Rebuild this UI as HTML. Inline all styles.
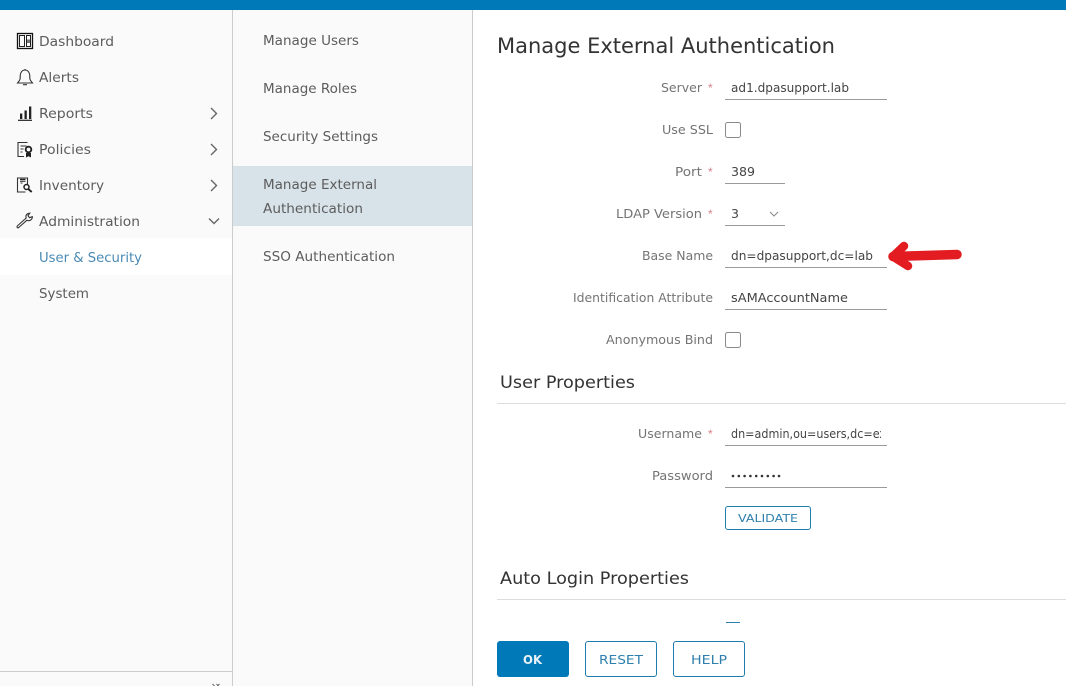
<!DOCTYPE html>
<html><head><meta charset="utf-8"><style>
html,body{margin:0;padding:0;background:#fff;width:1066px;height:686px;overflow:hidden}
svg{display:block}
text{font-family:"DejaVu Sans",sans-serif}
.n{font-size:13.5px;fill:#5c5c5c}
.l{font-size:12px;fill:#747474}
.v{font-size:12px;fill:#444}
.h{font-size:17px;fill:#333}
.s{font-family:"Liberation Sans",sans-serif;font-size:12px;fill:#d9808a}
.u{stroke:#9a9a9a;stroke-width:1;fill:none}
.c{fill:#fff;stroke:#8a8a8a;stroke-width:1}
.i{fill:none;stroke:#222;stroke-width:1.2}
.ch{fill:none;stroke:#666;stroke-width:1.4}
.b{font-size:12px;fill:#2f7fae}
</style></head><body>
<svg width="1066" height="686" viewBox="0 0 1066 686" xmlns="http://www.w3.org/2000/svg">
<rect width="1066" height="686" fill="#fff"/>
<rect x="0" y="10" width="232" height="676" fill="#fafafa"/>
<rect x="233" y="10" width="239" height="676" fill="#fafafa"/>
<rect x="0" y="0" width="1066" height="10" fill="#0079b8"/>
<rect x="0" y="238" width="232" height="37" fill="#fff"/>
<rect x="233" y="166" width="239" height="60" fill="#d8e3e9"/>
<rect x="232" y="10" width="1" height="676" fill="#ccc"/>
<rect x="472" y="10" width="1" height="676" fill="#ccc"/>
<rect x="0" y="671" width="232" height="1" fill="#ccc"/>
<path d="M212.500 684l2 2M216.500 684l2 2M219.500 684l-2 2" stroke="#666" fill="none"/>

<!-- nav icons -->
<rect x="17.500" y="33.500" width="15" height="15" fill="none" stroke="#111" stroke-width="1.300"/>
<rect x="19.500" y="35.500" width="5" height="11" fill="none" stroke="#222"/>
<rect x="26.500" y="35.500" width="4" height="11" fill="none" stroke="#222"/>
<rect x="27" y="39.500" width="3" height="3.500" fill="#777"/>
<path d="M25 70c-3 0-4.800 2.800-4.800 5.800v2.200c0 2.400-1.700 3.600-2.700 5h15c-1-1.400-2.700-2.600-2.700-5v-2.200c0-3-1.800-5.800-4.800-5.800zM23 84.700h4M25 69v1" fill="none" stroke="#333" stroke-width="1.100"/>
<rect x="20" y="113.500" width="2.300" height="5.500" fill="#222"/>
<rect x="24.500" y="110.500" width="2.300" height="8.500" fill="#222"/>
<rect x="29" y="106.500" width="2.300" height="12.500" fill="#222"/>
<rect x="18" y="119.700" width="14" height="1.200" fill="#222"/>
<path d="M27.500 142.500h-9.500v14h6M20.500 146h6M20.500 149h3M20.500 152h2" fill="none" stroke="#333" stroke-width="1.100"/>
<circle cx="28.500" cy="149.500" r="2.800" fill="#fff" stroke="#222" stroke-width="1.900"/>
<path d="M26 153v4.500l2.500-1.200 2.500 1.200V153z" fill="#222"/>
<path d="M27.500 186v-8h-10v14h8M20.500 183h2" fill="none" stroke="#333" stroke-width="1.100"/>
<rect x="20" y="178.800" width="5.500" height="1.500" fill="#222"/>
<rect x="20" y="181" width="5.500" height="1" fill="#555"/>
<circle cx="26.500" cy="187" r="2.500" fill="#fff" stroke="#222" stroke-width="1.500"/>
<path d="M28.300 189l3.400 3" stroke="#222" stroke-width="1.900"/>
<path d="M17.800 225.500l8.400-7.500c-.9-2.500.3-4.400 3.500-4.800l-1.700 2.500 1.500 2 2.800-1c.2 3-3 4.900-5.500 3.600l-8.200 7.300c-1.500.9-2.200-.9-.8-2.100z" fill="none" stroke="#333" stroke-width="1.100"/>

<text x="39" y="46" class="n" textLength="75" lengthAdjust="spacingAndGlyphs">Dashboard</text>
<text x="39" y="82" class="n" textLength="40" lengthAdjust="spacingAndGlyphs">Alerts</text>
<text x="39" y="118" class="n" textLength="54" lengthAdjust="spacingAndGlyphs">Reports</text>
<text x="39" y="154" class="n" textLength="52" lengthAdjust="spacingAndGlyphs">Policies</text>
<text x="39" y="190" class="n" textLength="65" lengthAdjust="spacingAndGlyphs">Inventory</text>
<text x="39" y="226" class="n" textLength="101" lengthAdjust="spacingAndGlyphs">Administration</text>
<text x="39" y="262" class="n" style="fill:#4a8ab5" textLength="103" lengthAdjust="spacingAndGlyphs">User &amp; Security</text>
<text x="39" y="298" class="n" textLength="50" lengthAdjust="spacingAndGlyphs">System</text>
<path d="M211 108l5.500 5.500-5.500 5.500M211 144l5.500 5.500-5.500 5.500M211 180l5.500 5.500-5.500 5.500M209 218.500l5 5 5-5" class="ch"/>

<text x="263" y="45" class="n" textLength="96" lengthAdjust="spacingAndGlyphs">Manage Users</text>
<text x="263" y="93" class="n" textLength="94" lengthAdjust="spacingAndGlyphs">Manage Roles</text>
<text x="263" y="141" class="n" textLength="115" lengthAdjust="spacingAndGlyphs">Security Settings</text>
<text x="263" y="189" class="n" textLength="114" lengthAdjust="spacingAndGlyphs">Manage External</text>
<text x="263" y="213" class="n" textLength="100" lengthAdjust="spacingAndGlyphs">Authentication</text>
<text x="263" y="261" class="n" textLength="132" lengthAdjust="spacingAndGlyphs">SSO Authentication</text>

<text x="497" y="53" font-size="21" fill="#333" textLength="338" lengthAdjust="spacingAndGlyphs">Manage External Authentication</text>

<text x="661" y="92" class="l" textLength="41" lengthAdjust="spacingAndGlyphs">Server</text>
<text x="708" y="92" class="s">*</text>
<text x="731" y="92" class="v" textLength="118" lengthAdjust="spacingAndGlyphs">ad1.dpasupport.lab</text>
<path d="M725 99.500h162" class="u"/>

<text x="662" y="134" class="l" textLength="51" lengthAdjust="spacingAndGlyphs">Use SSL</text>
<rect x="725.500" y="122.500" width="15" height="15" rx="2" class="c"/>

<text x="675" y="176" class="l" textLength="27" lengthAdjust="spacingAndGlyphs">Port</text>
<text x="708" y="176" class="s">*</text>
<text x="731" y="176" class="v" textLength="24" lengthAdjust="spacingAndGlyphs">389</text>
<path d="M725 183.500h60" class="u"/>

<text x="616" y="218" class="l" textLength="86" lengthAdjust="spacingAndGlyphs">LDAP Version</text>
<text x="708" y="218" class="s">*</text>
<text x="731" y="218" class="v" textLength="8" lengthAdjust="spacingAndGlyphs">3</text>
<path d="M770 212l4 4 4-4" fill="none" stroke="#888" stroke-width="1"/>
<path d="M725 225.500h60" class="u"/>

<text x="642" y="260" class="l" textLength="71" lengthAdjust="spacingAndGlyphs">Base Name</text>
<text x="731" y="260" class="v" textLength="142" lengthAdjust="spacingAndGlyphs">dn=dpasupport,dc=lab</text>
<path d="M725 267.500h162" class="u"/>
<path d="M893 256.500L957 254.500" stroke="#e21c20" stroke-width="9.500" stroke-linecap="round" fill="none"/>
<path d="M904 246L893 256.500 908 266" stroke="#e21c20" stroke-width="8.500" stroke-linecap="round" stroke-linejoin="round" fill="none"/>

<text x="573" y="302" class="l" textLength="140" lengthAdjust="spacingAndGlyphs">Identification Attribute</text>
<text x="731" y="302" class="v" textLength="117" lengthAdjust="spacingAndGlyphs">sAMAccountName</text>
<path d="M725 309.500h162" class="u"/>

<text x="606" y="344" class="l" textLength="107" lengthAdjust="spacingAndGlyphs">Anonymous Bind</text>
<rect x="725.500" y="332.500" width="15" height="15" rx="2" class="c"/>

<text x="500" y="388" class="h" textLength="135" lengthAdjust="spacingAndGlyphs">User Properties</text>
<rect x="497" y="403" width="569" height="1" fill="#ddd"/>

<text x="638" y="438" class="l" textLength="64" lengthAdjust="spacingAndGlyphs">Username</text>
<text x="708" y="438" class="s">*</text>
<svg x="725" y="420" width="156" height="30"><text x="6" y="18" class="v" textLength="155" lengthAdjust="spacingAndGlyphs">dn=admin,ou=users,dc=ex</text></svg>
<path d="M725 445.500h162" class="u"/>

<text x="652" y="480" class="l" textLength="61" lengthAdjust="spacingAndGlyphs">Password</text>
<g fill="#333"><circle cx="733" cy="476" r="1.300"/><circle cx="738.800" cy="476" r="1.300"/><circle cx="744.600" cy="476" r="1.300"/><circle cx="750.400" cy="476" r="1.300"/><circle cx="756.200" cy="476" r="1.300"/><circle cx="762" cy="476" r="1.300"/><circle cx="767.800" cy="476" r="1.300"/><circle cx="773.600" cy="476" r="1.300"/><circle cx="779" cy="476" r="1.300"/></g>
<path d="M725 487.500h162" class="u"/>

<rect x="725.500" y="506.500" width="85" height="23" rx="2.500" fill="#fff" stroke="#1f7cae"/>
<text x="738" y="522" font-size="10.500" fill="#2f7fae" textLength="60" lengthAdjust="spacingAndGlyphs">VALIDATE</text>

<text x="500" y="584" class="h" textLength="189" lengthAdjust="spacingAndGlyphs">Auto Login Properties</text>
<rect x="497" y="599" width="569" height="1" fill="#ddd"/>
<rect x="726" y="622" width="14" height="1" fill="#2f7fae"/>

<rect x="497" y="641" width="72" height="36" rx="3" fill="#0079b8"/>
<text x="523" y="664" font-size="12" font-weight="bold" fill="#e8f2f8" textLength="19" lengthAdjust="spacingAndGlyphs">OK</text>
<rect x="585.500" y="641.500" width="71" height="35" rx="2.500" fill="#fff" stroke="#1f7cae"/>
<text x="599" y="664" class="b" textLength="44" lengthAdjust="spacingAndGlyphs">RESET</text>
<rect x="673.500" y="641.500" width="71" height="35" rx="2.500" fill="#fff" stroke="#1f7cae"/>
<text x="691" y="664" class="b" textLength="36" lengthAdjust="spacingAndGlyphs">HELP</text>
</svg>
</body></html>
